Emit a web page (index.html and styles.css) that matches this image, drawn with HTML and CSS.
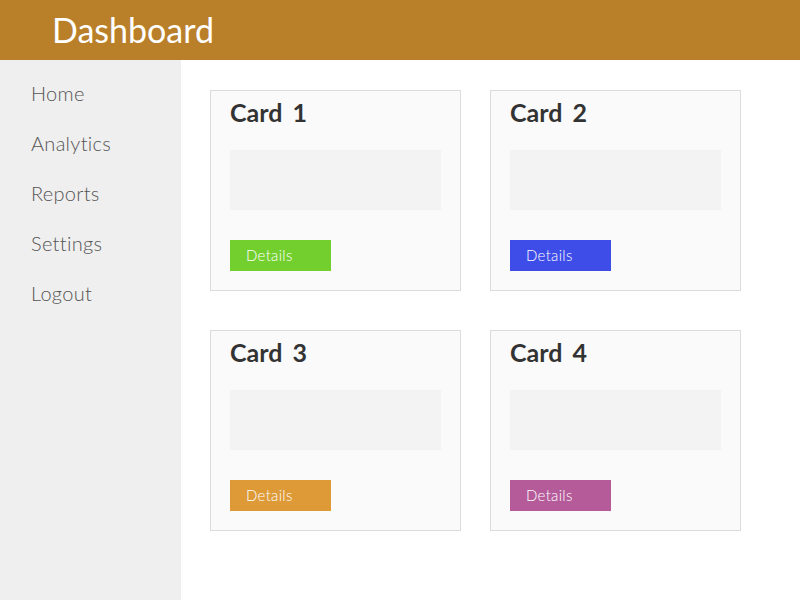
FILE: index.html
```html
<!DOCTYPE html>
<html>
<head>
<meta charset="utf-8">
<link rel="stylesheet" href="styles.css">
</head>
<body>
<header class="topbar"><h1 class="title">Dashboard</h1></header>
<div class="layout">
  <nav class="sidebar">
    <div class="nav-item">Home</div>
    <div class="nav-item">Analytics</div>
    <div class="nav-item">Reports</div>
    <div class="nav-item">Settings</div>
    <div class="nav-item">Logout</div>
  </nav>
  <main class="main">
    <div class="grid">
      <div class="card">
        <div class="card-title">Card 1</div>
        <div class="placeholder"></div>
        <div class="btn btn-green">Details</div>
      </div>
      <div class="card">
        <div class="card-title">Card 2</div>
        <div class="placeholder"></div>
        <div class="btn btn-blue">Details</div>
      </div>
      <div class="card">
        <div class="card-title">Card 3</div>
        <div class="placeholder"></div>
        <div class="btn btn-orange">Details</div>
      </div>
      <div class="card">
        <div class="card-title">Card 4</div>
        <div class="placeholder"></div>
        <div class="btn btn-purple">Details</div>
      </div>
    </div>
  </main>
</div>
</body>
</html>
```
FILE: styles.css
```css
html, body {
  margin: 0;
  padding: 0;
  height: 100%;
  background: #ffffff;
  font-family: "Lato", "DejaVu Sans", sans-serif;
}
.topbar {
  height: 60px;
  background: #b98029;
  display: flex;
  align-items: center;
  padding-left: 52px;
}
.title {
  margin: 0;
  color: #ffffff;
  font-size: 34px;
  font-weight: 400;
  line-height: 58px;
}
.layout {
  display: flex;
  height: 540px;
}
.sidebar {
  width: 181px;
  flex: none;
  background: #efefef;
  padding-top: 8px;
  box-sizing: border-box;
}
.nav-item {
  padding-left: 31px;
  height: 50px;
  line-height: 50px;
  font-size: 20px;
  font-weight: 300;
  color: #555555;
  letter-spacing: 0.3px;
}
.main {
  padding: 30px 0 0 29px;
}
.grid {
  display: grid;
  grid-template-columns: 251px 251px;
  column-gap: 29px;
  row-gap: 39px;
}
.card {
  box-sizing: border-box;
  width: 251px;
  height: 201px;
  background: #fafafa;
  border: 1px solid #dcdcdc;
  padding: 6px 19px 0 19px;
}
.card-title {
  font-size: 25px;
  line-height: 30px;
  font-weight: 700;
  color: #333333;
  word-spacing: 4px;
}
.placeholder {
  margin-top: 23px;
  height: 60px;
  background: #f3f3f3;
}
.btn {
  margin-top: 30px;
  width: 101px;
  height: 31px;
  box-sizing: border-box;
  padding-left: 16px;
  line-height: 31px;
  font-size: 15px;
  font-weight: 300;
  color: #ffffff;
  letter-spacing: 0.3px;
}
.btn-green { background: #73cf2e; }
.btn-blue { background: #3e4ce8; }
.btn-orange { background: #dd9a37; }
.btn-purple { background: #b55b9a; }
```
